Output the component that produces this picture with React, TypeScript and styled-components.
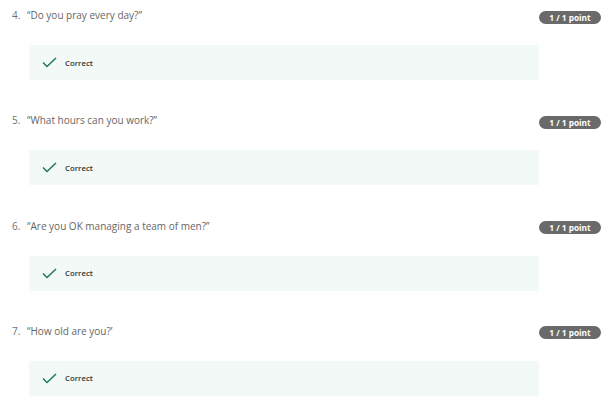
import styled, { createGlobalStyle } from "styled-components";

const GlobalStyle = createGlobalStyle`
  body {
    margin: 0;
    background: #ffffff;
    font-family: "Open Sans", "DejaVu Sans", sans-serif;
  }
`;

const questions = [
  { number: 4, text: "\u201cDo you pray every day?\u201d" },
  { number: 5, text: "\u201cWhat hours can you work?\u201d" },
  { number: 6, text: "\u201cAre you OK managing a team of men?\u201d" },
  { number: 7, text: "\u201cHow old are you?\u2019" },
];

const List = styled.div`
  display: flex;
  flex-direction: column;
  width: 610px;
`;

const Item = styled.div`
  display: flex;
  flex-direction: column;
  height: 105.3px;
  padding-top: 8px;
  box-sizing: border-box;
`;

const Header = styled.div`
  display: flex;
  align-items: center;
  height: 14px;
  padding: 0 9px 0 12px;
`;

const Number = styled.span`
  flex-shrink: 0;
  width: 15px;
  font-size: 10px;
  font-weight: 400;
  color: #707070;
`;

const Question = styled.span`
  flex: 1;
  font-size: 10px;
  font-weight: 400;
  color: #666666;
`;

const Badge = styled.span`
  display: flex;
  align-items: center;
  justify-content: center;
  width: 62px;
  height: 13px;
  margin-top: 4px;
  border-radius: 7px;
  background: #6a6a6a;
  color: #ffffff;
  font-size: 8.3px;
  font-weight: 700;
`;

const Result = styled.div`
  display: flex;
  align-items: center;
  gap: 8px;
  margin: 23px 0 0 29px;
  width: 510px;
  height: 35px;
  padding-left: 13px;
  box-sizing: border-box;
  background: #f3f9f7;
`;

const ResultLabel = styled.span`
  font-size: 7.8px;
  font-weight: 600;
  color: #333333;
`;

const Check = () => (
  <svg width="15" height="11" viewBox="0 0 15 11" fill="none">
    <path d="M1 5.5 L5 9.5 L14 1" stroke="#1f7a4d" strokeWidth="1.5" />
  </svg>
);

export default function App() {
  return (
    <>
      <GlobalStyle />
      <List>
        {questions.map((q) => (
          <Item key={q.number}>
            <Header>
              <Number>{q.number}.</Number>
              <Question>{q.text}</Question>
              <Badge>1 / 1 point</Badge>
            </Header>
            <Result>
              <Check />
              <ResultLabel>Correct</ResultLabel>
            </Result>
          </Item>
        ))}
      </List>
    </>
  );
}
